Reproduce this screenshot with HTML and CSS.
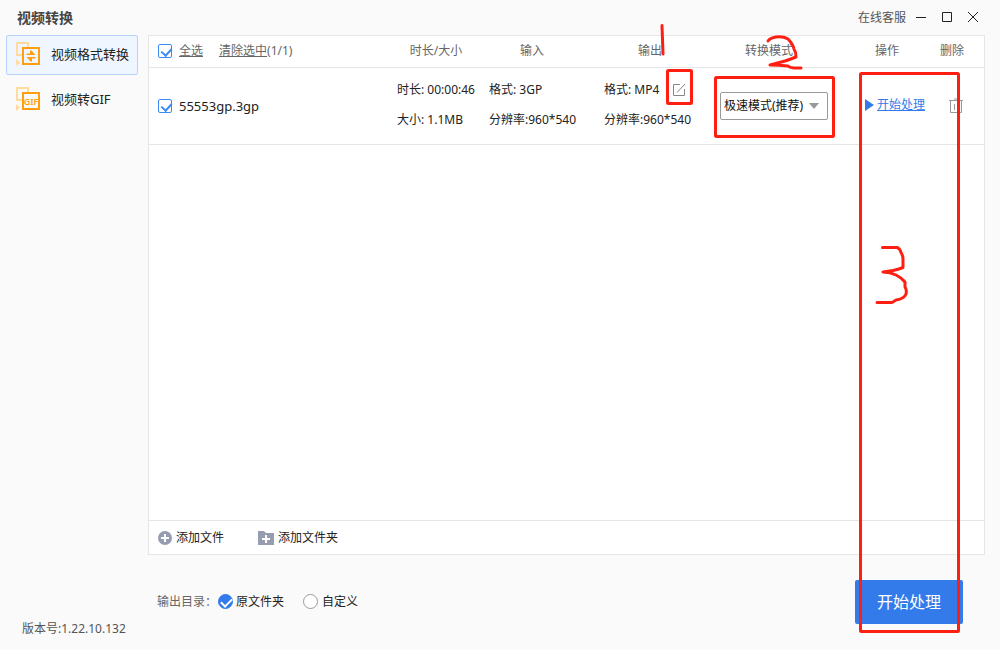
FILE: index.html
```html
<!DOCTYPE html>
<html lang="zh-CN">
<head>
<meta charset="utf-8">
<meta name="viewport" content="width=device-width, initial-scale=1">
<title>视频转换</title>
<link rel="stylesheet" href="styles.css">
</head>
<body>
<div class="app">
  <header class="titlebar">
    <h1 class="title">视频转换</h1>
    <a class="service" href="#">在线客服</a>
    <button class="win-btn" aria-label="最小化"><svg width="12" height="12" viewBox="0 0 12 12"><path d="M1 5.500h10" stroke="#222" fill="none"/></svg></button>
    <button class="win-btn" aria-label="最大化"><svg width="12" height="12" viewBox="0 0 12 12"><path d="M1.500 .5h9v9h-9z" stroke="#222" fill="none"/></svg></button>
    <button class="win-btn" aria-label="关闭"><svg width="12" height="12" viewBox="0 0 12 12"><path d="M1 0l10 10M11 0L1 10" stroke="#222" fill="none"/></svg></button>
  </header>

  <div class="body">
    <aside class="sidebar">
      <nav class="nav">
        <a class="nav-item active" href="#">
          <svg width="26" height="24" viewBox="0 0 26 24"><g fill="none" stroke="#ffdb9f" stroke-width="2"><path d="M7 13H2V1h11v4"/></g><path d="M1 17l4 3.500L1 24z" fill="#ffdb9f"/><path d="M8 6h16v16H8z" fill="none" stroke="#ff9f0f" stroke-width="2"/><path d="M11.500 13v-1.500H15V8.500h1.500l4 4.500zM20.500 15v1.500H17v3h-1.500l-4-4.500z" fill="#ff9f0f"/></svg>
          视频格式转换
        </a>
        <a class="nav-item" href="#">
          <svg width="26" height="24" viewBox="0 0 26 24"><g fill="none" stroke="#ffdb9f" stroke-width="2"><path d="M7 13H2V1h11v4"/></g><path d="M1 17l4 3.500L1 24z" fill="#ffdb9f"/><path d="M8 6h16v16H8z" fill="none" stroke="#ff9f0f" stroke-width="2"/><text class="gif-text" x="16" y="18" text-anchor="middle">GIF</text></svg>
          视频转GIF
        </a>
      </nav>
      <p class="version">版本号:1.22.10.132</p>
    </aside>

    <main class="main">
      <section class="panel">
        <table class="files">
          <colgroup><col><col class="c-size"><col class="c-in"><col class="c-out"><col class="c-mode"><col class="c-act"><col class="c-del"></colgroup>
          <thead>
            <tr>
              <th class="name"><div class="name-row"><input class="check" type="checkbox" id="all" checked><label class="under" for="all">全选</label><span class="clear"><a class="under" href="#">清除选中</a>(1/1)</span></div></th>
              <th>时长/大小</th><th>输入</th><th>输出</th><th class="h-mode">转换模式</th><th class="h-end">操作</th><th class="h-end">删除</th>
            </tr>
          </thead>
          <tbody>
            <tr>
              <td class="name"><div class="name-row"><input class="check" type="checkbox" id="f1" checked><label class="filename" for="f1">55553gp.3gp</label></div></td>
              <td class="d-size"><div class="pair"><span>时长: 00:00:46</span><span>大小: 1.1MB</span></div></td>
              <td class="d-in"><div class="pair"><span>格式: 3GP</span><span>分辨率:960*540</span></div></td>
              <td class="d-out"><div class="pair"><span class="fmt">格式: MP4 <button class="icon-btn" aria-label="编辑"><svg width="14" height="14" viewBox="0 0 14 14"><path d="M8 1.500H1.500v11h11V6M5 9.500L13 1" stroke="#888" fill="none"/></svg></button></span><span>分辨率:960*540</span></div></td>
              <td class="d-mode"><div class="mode"><select aria-label="转换模式"><option>极速模式(推荐)</option></select></div></td>
              <td class="d-act"><a class="start-link" href="#"><svg width="9" height="12" viewBox="0 0 9 12"><path d="M0 0l9 6-9 6z" fill="#337bea"/></svg><span class="under">开始处理</span></a></td>
              <td class="d-del"><button class="icon-btn" aria-label="删除"><svg width="16" height="16" viewBox="0 0 16 16"><path d="M1 2.500h14M6 1h4M2.500 3v11.500h11V3M6.500 6v6M9.500 6v6" stroke="#999" fill="none"/></svg></button></td>
            </tr>
          </tbody>
        </table>
        <div class="toolbar">
          <button class="add"><svg width="14" height="14" viewBox="0 0 14 14"><circle cx="7" cy="7" r="7" fill="#979db1"/><path d="M7 3v8M3 7h8" stroke="#fff" stroke-width="2"/></svg>添加文件</button>
          <button class="add"><svg width="16" height="14" viewBox="0 0 16 14"><path d="M0 0h6l2 2h8v12H0z" fill="#979db1"/><path d="M8 4v8M4 8h8" stroke="#fff" stroke-width="2"/></svg>添加文件夹</button>
        </div>
      </section>
      <footer class="bottom">
        <span class="out-label">输出目录：</span>
        <input class="radio" type="radio" name="dir" id="src" checked><label for="src">原文件夹</label>
        <input class="radio second" type="radio" name="dir" id="custom"><label for="custom">自定义</label>
        <button class="primary">开始处理</button>
      </footer>
    </main>
  </div>

  <svg class="marks" width="300" height="640" viewBox="700 0 300 640" aria-hidden="true">
    <g fill="none" stroke="#ff1f12" stroke-width="3" stroke-linecap="round" stroke-linejoin="round">
      <path d="M662 25.500L663 54"/>
      <rect x="667.500" y="70.500" width="24" height="33" rx="1"/>
      <rect x="715.500" y="77.500" width="118" height="59" rx="1"/>
      <rect x="860.500" y="73.500" width="98" height="558" rx="1"/>
      <path d="M768 41q2-3 8-4q7-1 12 2q5 5 6 10q2 3 2 8q-5 2-11 4l-15 4q9 0 18 1q2 2 7 2h6"/>
      <path d="M882.500 247.500H897q3 1 4 5q2 3 2 7v8q-5 2-10 3l-10 1.500q7 0 13 3q6 3 9 7v5q2 3 1 7q-2 5-10 6q-2 1-3 2l-1 .5h-15"/>
    </g>
  </svg>
</div>
</body>
</html>
```
FILE: styles.css
```css
* { box-sizing: border-box; }
body {
  margin: 0;
  background: #fafafa;
  color: #222;
  font: 12px/20px "Noto Sans", "Noto Sans CJK SC", sans-serif;
}
button, select, input { font: inherit; color: inherit; margin: 0; padding: 0; }
button { border: 0; background: none; }
a { color: inherit; text-decoration: none; }
svg { display: block; flex: none; }
.under { text-decoration: underline; }

.app { position: relative; display: flex; flex-direction: column; min-height: 100vh; }
.titlebar { display: flex; align-items: center; height: 35px; padding: 0 21px 0 17px; gap: 14px; color: #555; }
.title { margin: 0 auto 0 0; font-size: 14px; font-weight: 600; color: #444; }
.service { margin-right: -5px; }
.win-btn { width: 12px; height: 12px; }

.body { flex: 1; display: flex; }
.sidebar { width: 148px; flex: none; display: flex; flex-direction: column; padding: 0 10px 11px 6px; }
.nav { display: flex; flex-direction: column; gap: 5px; }
.nav-item { display: flex; align-items: center; gap: 10px; height: 40px; padding: 0 0 2px 8px; border: 1px solid transparent; border-radius: 2px; font-size: 13px; white-space: nowrap; }
.nav-item.active { background: #eff6ff; border-color: #b6d4fb; }
.gif-text { font: 600 9px "Noto Sans", sans-serif; fill: #ff9f0f; }
.version { margin: auto 0 0 16px; color: #555; }

.main { flex: 1; min-width: 0; display: flex; flex-direction: column; padding-right: 15px; }
.panel { flex: 1; display: flex; flex-direction: column; background: #fff; border: 1px solid #e6e6e6; }
.files { width: 100%; table-layout: fixed; border-collapse: collapse; }
.files th, .files td { padding: 0; border-bottom: 1px solid #e6e6e6; white-space: nowrap; text-align: left; }
.files th { height: 31px; font-weight: 400; color: #666; text-align: center; }
.files td { height: 77px; }
.c-size { width: 88px; }
.c-in { width: 104px; }
.c-out { width: 132px; }
.c-mode { width: 138px; }
.c-act { width: 78px; }
.c-del { width: 52px; }
.files .h-mode { padding-right: 32px; }
.files .h-end { padding-right: 12px; }
.files .name { padding-left: 9px; }
.name-row { display: flex; align-items: center; gap: 7px; }
.clear { margin-left: 9px; }
.filename { font-size: 13px; }
.files .d-size { padding: 0 0 2px 5px; }
.files .d-in { padding: 0 0 2px 9px; }
.files .d-out { padding: 0 0 2px 20px; }
.files .d-mode { padding-left: 4px; }
.files .d-act { padding: 0 0 2px 11px; }
.files .d-del { padding-left: 16px; }
.icon-btn { display: block; }
.pair { display: flex; flex-direction: column; gap: 10px; }
.fmt { display: flex; align-items: center; gap: 13px; }
.mode { position: relative; width: 108px; }
.mode select { display: block; width: 100%; height: 28px; padding: 0 3px; appearance: none; border: 1px solid #999; border-radius: 2px; background: #fff; color: #111; }
.mode::after { content: ""; position: absolute; right: 9px; top: 11px; border: 5px solid transparent; border-top: 6px solid #999; border-bottom: 0; pointer-events: none; }
.start-link { display: flex; align-items: center; gap: 3px; color: #337bea; }

.check { appearance: none; position: relative; flex: none; width: 14px; height: 14px; border: 1px solid #3d8af5; border-radius: 2px; background: #fff; }
.check:checked::after { content: ""; position: absolute; left: 4px; top: 1px; width: 5px; height: 8px; border: solid #3d8af5; border-width: 0 2px 2px 0; transform: rotate(42deg); }

.toolbar { display: flex; align-items: center; gap: 34px; height: 34px; margin-top: auto; padding: 0 9px; border-top: 1px solid #e6e6e6; }
.add { display: flex; align-items: center; gap: 4px; }

.bottom { display: flex; align-items: center; height: 95px; padding: 0 22px 2px 9px; }
.out-label { color: #666; margin-right: 1px; }
.radio { appearance: none; position: relative; width: 15px; height: 15px; margin-right: 3px; border: 1px solid #999; border-radius: 50%; background: #fff; }
.radio.second { margin-left: 19px; margin-right: 4px; }
.radio:checked { background: #337bea; border-color: #337bea; }
.radio:checked::after { content: ""; position: absolute; left: 4px; top: 1px; width: 5px; height: 9px; border: solid #fff; border-width: 0 2px 2px 0; transform: rotate(45deg); }
.primary { width: 108px; height: 44px; margin-left: auto; border-radius: 2px; background: #337bea; color: #fff; font-size: 16px; }

.marks { position: absolute; top: 0; right: 0; overflow: visible; pointer-events: none; }
```
